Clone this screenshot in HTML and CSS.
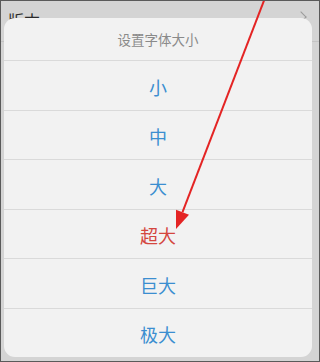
FILE: index.html
```html
<!DOCTYPE html>
<html lang="zh-CN">
<head>
    <meta charset="UTF-8">
    <meta name="viewport" content="width=device-width, initial-scale=1.0">
    <title>设置字体大小</title>
    <link rel="stylesheet" href="styles.css">
</head>
<body>
    <div class="screen">
        <div class="page">
            <div class="page-row">
                <span class="page-label">版本</span>
                <span class="chevron"></span>
            </div>
        </div>

        <div class="sheet">
            <div class="sheet-title">设置字体大小</div>
            <div class="sheet-item">小</div>
            <div class="sheet-item">中</div>
            <div class="sheet-item">大</div>
            <div class="sheet-item active">超大</div>
            <div class="sheet-item">巨大</div>
            <div class="sheet-item">极大</div>
        </div>

        <!-- annotation arrow pointing at the chosen option -->
        <svg class="arrow" width="318" height="360" viewBox="0 0 318 360">
            <line x1="264" y1="-3" x2="181.5" y2="211.2" stroke="#e42424" stroke-width="2"/>
            <polygon points="175,228 175,208.7 188,213.7" fill="#e42424"/>
        </svg>
    </div>
</body>
</html>
```

FILE: styles.css
```css
body {
    margin: 0;
    padding: 0;
    font-family: "Noto Sans CJK SC", "Noto Sans", sans-serif;
}
.screen {
    position: relative;
    width: 320px;
    height: 362px;
    box-sizing: border-box;
    border: 1px solid #5a5a5a;
    background: #d4d4d4;
    overflow: hidden;
}
.page-row {
    display: flex;
    justify-content: space-between;
    align-items: center;
    height: 40px;
    padding: 0 14px 0 7px;
    border-bottom: 1px solid #c4c4c4;
}
.page-label {
    font-size: 16px;
    color: #2a2a2a;
    margin-top: -3px;
}
.chevron {
    width: 7px;
    height: 7px;
    border-top: 1.5px solid #9a9a9a;
    border-right: 1.5px solid #9a9a9a;
    transform: rotate(45deg);
    margin-top: -9px;
}
.sheet {
    position: absolute;
    top: 17px;
    left: 3px;
    width: 308px;
    height: 339px;
    background: #f2f2f2;
    border-radius: 11px;
    overflow: hidden;
}
.sheet-title {
    height: 42px;
    display: flex;
    justify-content: center;
    align-items: center;
    font-size: 13.5px;
    color: #8a8a8a;
}
.sheet-item {
    height: 49.5px;
    box-sizing: border-box;
    border-top: 1px solid #dadada;
    display: flex;
    justify-content: center;
    align-items: center;
    padding-top: 3px;
    font-size: 18px;
    color: #3b8ed0;
}
.sheet-item.active {
    color: #d4463e;
}
.arrow {
    position: absolute;
    top: 0;
    left: 0;
}
```
